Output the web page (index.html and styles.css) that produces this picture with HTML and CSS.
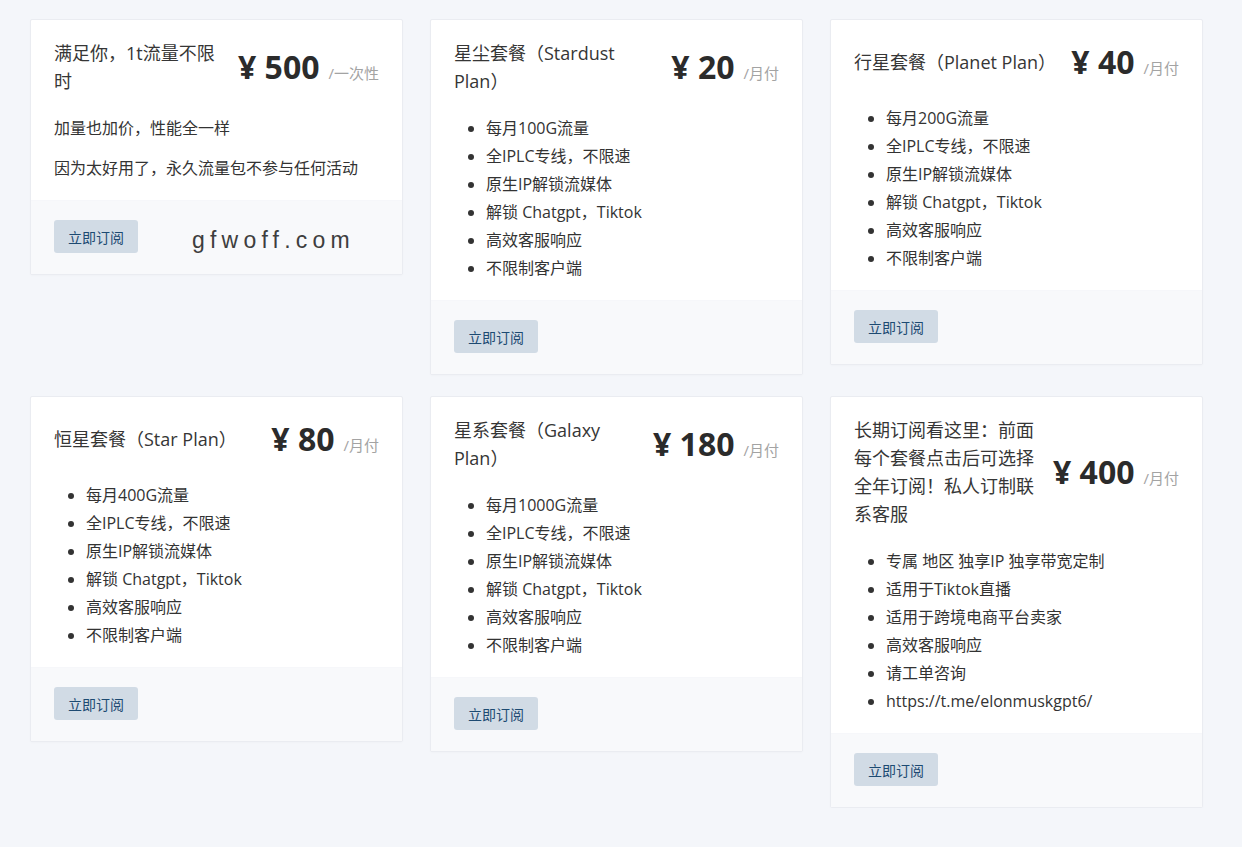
FILE: index.html
```html
<!DOCTYPE html>
<html lang="zh-CN">
<head>
<meta charset="utf-8">
<title>套餐</title>
<link rel="stylesheet" href="styles.css">
</head>
<body>
<div class="plans">
  <div class="card">
    <div class="card-body">
      <div class="card-head">
        <div class="title">满足你，1t流量不限时</div>
        <div class="price">¥ 500<span class="unit">/一次性</span></div>
      </div>
      <div class="desc">
        <p>加量也加价，性能全一样</p>
        <p>因为太好用了，永久流量包不参与任何活动</p>
      </div>
    </div>
    <div class="card-foot">
      <button class="btn">立即订阅</button>
      <span class="watermark">gfwoff.com</span>
    </div>
  </div>

  <div class="card">
    <div class="card-body">
      <div class="card-head">
        <div class="title">星尘套餐（Stardust Plan）</div>
        <div class="price">¥ 20<span class="unit">/月付</span></div>
      </div>
      <ul class="features">
        <li>每月100G流量</li>
        <li>全IPLC专线，不限速</li>
        <li>原生IP解锁流媒体</li>
        <li>解锁 Chatgpt，Tiktok</li>
        <li>高效客服响应</li>
        <li>不限制客户端</li>
      </ul>
    </div>
    <div class="card-foot"><button class="btn">立即订阅</button></div>
  </div>

  <div class="card">
    <div class="card-body">
      <div class="card-head">
        <div class="title">行星套餐（Planet Plan）</div>
        <div class="price">¥ 40<span class="unit">/月付</span></div>
      </div>
      <ul class="features">
        <li>每月200G流量</li>
        <li>全IPLC专线，不限速</li>
        <li>原生IP解锁流媒体</li>
        <li>解锁 Chatgpt，Tiktok</li>
        <li>高效客服响应</li>
        <li>不限制客户端</li>
      </ul>
    </div>
    <div class="card-foot"><button class="btn">立即订阅</button></div>
  </div>

  <div class="card">
    <div class="card-body">
      <div class="card-head">
        <div class="title">恒星套餐（Star Plan）</div>
        <div class="price">¥ 80<span class="unit">/月付</span></div>
      </div>
      <ul class="features">
        <li>每月400G流量</li>
        <li>全IPLC专线，不限速</li>
        <li>原生IP解锁流媒体</li>
        <li>解锁 Chatgpt，Tiktok</li>
        <li>高效客服响应</li>
        <li>不限制客户端</li>
      </ul>
    </div>
    <div class="card-foot"><button class="btn">立即订阅</button></div>
  </div>

  <div class="card">
    <div class="card-body">
      <div class="card-head">
        <div class="title">星系套餐（Galaxy Plan）</div>
        <div class="price">¥ 180<span class="unit">/月付</span></div>
      </div>
      <ul class="features">
        <li>每月1000G流量</li>
        <li>全IPLC专线，不限速</li>
        <li>原生IP解锁流媒体</li>
        <li>解锁 Chatgpt，Tiktok</li>
        <li>高效客服响应</li>
        <li>不限制客户端</li>
      </ul>
    </div>
    <div class="card-foot"><button class="btn">立即订阅</button></div>
  </div>

  <div class="card">
    <div class="card-body">
      <div class="card-head">
        <div class="title">长期订阅看这里：前面每个套餐点击后可选择全年订阅！私人订制联系客服</div>
        <div class="price">¥ 400<span class="unit">/月付</span></div>
      </div>
      <ul class="features">
        <li>专属 地区 独享IP 独享带宽定制</li>
        <li>适用于Tiktok直播</li>
        <li>适用于跨境电商平台卖家</li>
        <li>高效客服响应</li>
        <li>请工单咨询</li>
        <li>https://t.me/elonmuskgpt6/</li>
      </ul>
    </div>
    <div class="card-foot"><button class="btn">立即订阅</button></div>
  </div>
</div>
</body>
</html>
```
FILE: styles.css
```css
* { box-sizing: border-box; }

body {
  margin: 0;
  background: #f4f6fa;
  font-family: "Open Sans", "Noto Sans CJK SC", sans-serif;
  color: #333;
  font-size: 16px;
}

.plans {
  width: 1173px;
  margin: 19px 0 0 30px;
  display: grid;
  grid-template-columns: repeat(3, 373px);
  column-gap: 27px;
  row-gap: 21px;
  align-items: start;
}

.card {
  background: #fff;
  border: 1px solid #eaecf1;
  border-radius: 2px;
  box-shadow: 0 1px 2px rgba(0, 0, 0, 0.02);
  overflow: hidden;
}

.card-body {
  padding: 19px 23px 18px;
}

.card-head {
  display: flex;
  align-items: center;
  gap: 13px;
}

.title {
  flex: 1;
  min-width: 0;
  font-size: 18px;
  line-height: 28px;
  color: #363636;
}

.price {
  flex-shrink: 0;
  height: 46px;
  font-size: 32px;
  font-weight: 700;
  line-height: 46px;
  color: #2b2b2b;
  white-space: nowrap;
}

.unit {
  font-size: 15px;
  font-weight: 400;
  line-height: 1;
  color: #a3a3a3;
  margin-left: 9px;
}

.desc {
  margin-top: 19px;
}

.desc p {
  margin: 0 0 12px;
  line-height: 28px;
  font-size: 16px;
}

.desc p:last-child { margin-bottom: 0; }

.features {
  margin: 19px 0 0;
  padding: 0 0 0 32px;
  font-size: 16px;
  line-height: 28px;
}

.card-foot {
  position: relative;
  background: #f8f9fb;
  border-top: 1px solid #f6f7fa;
  padding: 19px 23px 21px;
}

.btn {
  display: block;
  height: 33px;
  padding: 0 14px;
  border: none;
  border-radius: 3px;
  background: #d1dbe5;
  color: #1d4a72;
  font-family: "Noto Sans CJK SC", sans-serif;
  font-size: 14px;
  cursor: pointer;
}

.watermark {
  position: absolute;
  left: 161px;
  top: 24px;
  font-family: "Liberation Sans", Arial, sans-serif;
  font-size: 23px;
  letter-spacing: 5.2px;
  color: #3e3e3e;
  line-height: 30px;
}
```
